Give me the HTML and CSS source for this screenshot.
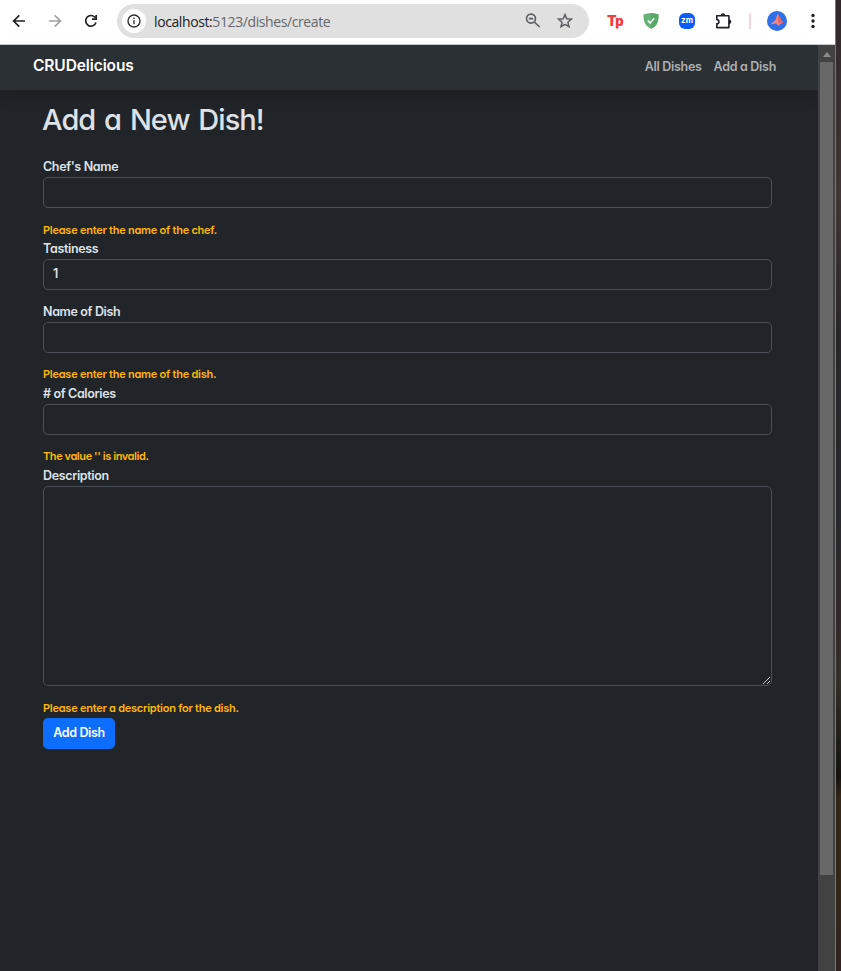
FILE: index.html
```html
<!DOCTYPE html>
<html lang="en">
<head>
<meta charset="utf-8">
<title>Add a Dish</title>
<link rel="stylesheet" href="styles.css">
</head>
<body>
<div class="window">
  <header class="toolbar">
    <svg class="chrome-icons" width="110" height="44" viewBox="0 0 110 44" fill="none" stroke="#1f2023" stroke-width="1.7">
      <path d="M25 21H14M19.3 15.3 13.6 21l5.7 5.7"/>
      <path stroke="#a0a0a0" d="M49 21h11M54.7 15.3 60.4 21l-5.7 5.7"/>
      <path d="M95.2 17.6A5.3 5.3 0 1 0 96 22.5M96.2 15v4.2H92"/>
    </svg>
    <div class="address">
      <span class="info"><svg width="16" height="16" viewBox="0 0 16 16" fill="none" stroke="#303134" stroke-width="1.4"><circle cx="8" cy="8" r="6"/><path d="M8 7.2v4M8 4.5v1.5"/></svg></span>
      <span class="url"><b>localhost:</b>5123/dishes/create</span>
      <svg class="address-icons" width="52" height="20" viewBox="0 0 52 20" fill="none" stroke="#5c5d60" stroke-width="1.6"><circle cx="6" cy="7.6" r="4.5"/><path d="m9.4 11 5.2 5M3.8 7.6h4.4"/><path stroke-width="1.5" d="m40 3.6 1.8 4.2 4.6.4-3.5 3 1.1 4.5-4-2.4-4 2.4 1.1-4.5-3.5-3 4.6-.4z"/></svg>
    </div>
    <div class="extensions">
      <span class="tp"><b>T</b><i>p</i></span>
      <svg class="shield" width="16" height="16" viewBox="0 0 16 16"><path fill="#67b279" d="M8 0c2.5 0 5 .5 7.5 1.5 0 6-.5 11-7.5 14.3C1 12.500.5 7.500.5 1.500 3 .5 5.500 0 8 0"/><path fill="#57a968" d="M8 0c2.500 0 5 .5 7.500 1.500 0 6-.5 11-7.500 14.300z"/><path d="m4.800 7.600 2.400 2.500 4-5" fill="none" stroke="#fff" stroke-width="1.500"/></svg>
      <span class="zm">zm</span>
      <svg class="puzzle" width="18" height="18" viewBox="0 0 18 18"><path d="M1.800 3.800h12.100v11.800H1.800v-3.800a2.100 2.100 0 0 0 0-4.200z" fill="none" stroke="#1f2023" stroke-width="1.600" stroke-linejoin="round"/><path fill="#1f2023" d="M5.600 3.500a2.300 2.300 0 0 1 4.600 0zM14 7.400a2.300 2.300 0 0 1 0 4.600z"/></svg>
      <span class="divider"></span>
      <svg class="avatar" width="20" height="20" viewBox="0 0 20 20"><circle cx="10" cy="10" r="10" fill="#2f70e9"/><path d="M10.500 2.500 8.500 9 3.500 13.200l5.500-.4 3 1.900 1-1.700 3.200-1.200z" fill="#f3877f"/><path d="m10.500 2.500.8 9.500 4.900-.2z" fill="#e8666a"/><path d="m3.500 13.200 5.500-.4 2.300-.8z" fill="#dc525c"/></svg>
      <svg class="dots" width="4" height="16" viewBox="0 0 4 16" fill="#1f2023"><circle cx="2" cy="2.500" r="1.700"/><circle cx="2" cy="8" r="1.700"/><circle cx="2" cy="13.500" r="1.700"/></svg>
    </div>
  </header>
  <div class="viewport">
    <div class="page">
      <nav class="navbar">
        <a class="brand">CRUDelicious</a>
        <a class="link link-all">All Dishes</a>
        <a class="link">Add a Dish</a>
      </nav>
      <main class="content">
        <h1>Add a New Dish!</h1>
        <form>
          <div class="field"><label>Chef's Name</label><input type="text"></div>
          <p class="error">Please enter the name of the chef.</p>
          <div class="field"><label>Tastiness</label><input type="text" value="1"></div>
          <div class="field dish"><label>Name of Dish</label><input type="text"></div>
          <p class="error error-dish">Please enter the name of the dish.</p>
          <div class="field calories"><label># of Calories</label><input type="text"></div>
          <p class="error error-value">The value '' is invalid.</p>
          <div class="field description"><label>Description</label><textarea></textarea>
            <svg class="grip" width="9" height="9" viewBox="0 0 9 9" stroke="#c4c6c8"><path d="M1 8 8 1M5 8l3-3"/></svg>
          </div>
          <p class="error error-last">Please enter a description for the dish.</p>
          <button type="button">Add Dish</button>
        </form>
      </main>
    </div>
    <div class="scrollbar"><span class="arrow"></span><span class="thumb"></span></div>
  </div>
</div>
<div class="desktop"></div>
</body>
</html>
```
FILE: styles.css
```css
* { box-sizing: border-box; }
body { margin: 0; height: 971px; overflow: hidden; display: flex; font-family: Inter, "Liberation Sans", sans-serif; font-feature-settings: "cv11"; font-size: 12.5px; font-weight: 600; color: #dee2e6; }
.window { width: 836px; height: 971px; display: flex; flex-direction: column; border-right: 1px solid #777; background: #fff; }
.desktop { flex: 1; background: linear-gradient(#30282a 0%, #413535 20%, #29272a 34%, #28292d 53%, #33292a 64%, #33302a 70%, #151310 80%, #332719 82%, #332719 92%, #302222 100%); }

.toolbar { height: 45px; flex: none; display: flex; border-bottom: 1px solid #c9cccd; }
.chrome-icons { flex: none; }
.address { width: 472px; height: 34px; margin: 4px 0 0 7px; border-radius: 17px; background: #e0e0e0; display: flex; align-items: center; flex: none; }
.info { width: 24px; height: 24px; margin-left: 5px; border-radius: 50%; background: #fff; display: flex; align-items: center; justify-content: center; }
.url { margin-left: 8px; font: 14px "Open Sans", sans-serif; color: #66686b; letter-spacing: -.4px; }
.url b { font-weight: 400; color: #202124; }
.address-icons { margin-left: auto; margin-right: 12px; }
.extensions { display: flex; align-items: center; height: 42px; margin-left: 18px; }
.tp { width: 17px; color: #f23d3d; font: 900 14px/18px Inter, sans-serif; letter-spacing: -1.5px; white-space: nowrap; }
.tp b { font-weight: 900; }
.tp i { font-style: normal; font-size: 13px; }
.shield { margin-left: 19px; }
.zm { width: 16px; height: 16px; margin-left: 20px; border-radius: 6px; background: #0b5cff; color: #fff; font: 700 8px/14px Inter, sans-serif; text-align: center; }
.puzzle { margin-left: 20px; }
.divider { width: 2px; height: 16px; margin-left: 16px; background: #f6d3df; }
.avatar { margin-left: 16px; }
.dots { margin-left: 24px; }

.viewport { flex: 1; display: flex; min-height: 0; }
.page { width: 818px; background: #212529; }
.navbar { height: 45px; display: flex; align-items: center; padding: 0 42px 0 33px; background: #2b3035; box-shadow: 0 6px 13px rgba(0, 0, 0, .18); }
.brand { margin-right: auto; padding-bottom: 5px; color: #fff; font-size: 15.5px; letter-spacing: -.1px; }
.link { padding-bottom: 2px; color: #aeb1b4; font-size: 12.5px; letter-spacing: -.3px; }
.link-all { margin-right: 12px; }

.content { width: 729px; margin-left: 43px; padding-top: 11px; }
h1 { margin: 0 0 0 -1px; height: 58px; font-size: 29px; line-height: 38px; font-weight: 500; letter-spacing: -.95px; word-spacing: 2px; }
.field { position: relative; height: 63px; }
.dish { height: 62px; }
.calories { height: 62px; }
label { display: block; height: 18px; line-height: 16px; letter-spacing: -.35px; }
input, textarea { display: block; width: 729px; height: 31px; padding: 3px 9px 5px; border: 1px solid #495057; border-radius: 5px; background: #212529; color: #dee2e6; font: inherit; font-feature-settings: inherit; outline: 0; }
.error { margin: 0; height: 19px; line-height: 16px; font-size: 11px; color: #ffb70b; letter-spacing: -.25px; }
.error-dish { height: 20px; }
.error-value { height: 20px; letter-spacing: -.42px; }
.error-last { height: 18px; }
.description { height: 232px; }
textarea { height: 200px; resize: none; }
.grip { position: absolute; top: 208px; right: 1px; height: 9px; }
button { display: block; width: 72px; height: 31px; padding: 0 0 2px; border: 0; border-radius: 5px; background: #0d6efd; color: #fff; font: inherit; font-feature-settings: inherit; letter-spacing: -.35px; }

.scrollbar { width: 17px; background: #424242; display: flex; flex-direction: column; align-items: center; }
.arrow { height: 5px; margin: 7px 0 5px; border: 4px solid transparent; border-top: 0; border-bottom: 5px solid #8a8a8a; }
.thumb { width: 13px; height: 813px; background: #686868; }
```
